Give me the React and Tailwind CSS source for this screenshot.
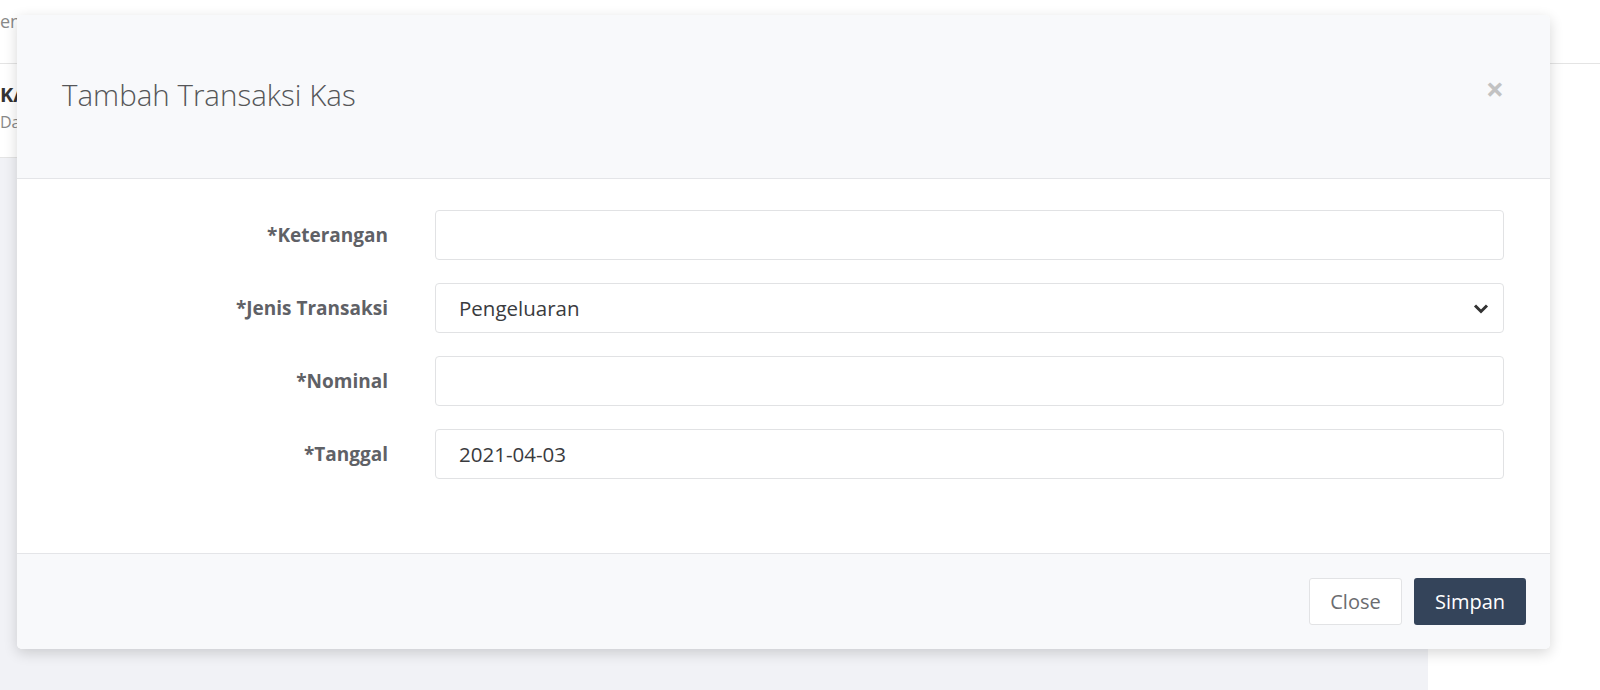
import React from 'react';

const fields = [
    { label: '*Keterangan', type: 'text', value: '' },
    { label: '*Jenis Transaksi', type: 'select', value: 'Pengeluaran' },
    { label: '*Nominal', type: 'text', value: '' },
    { label: '*Tanggal', type: 'text', value: '2021-04-03' },
];

const FormRow = ({ field }) => (
    <div className="flex items-center">
        <label className="w-[371px] shrink-0 text-right text-[19px] font-bold text-[#5f6166]">
            {field.label}
        </label>
        <div className="ml-[47px] flex-1 h-[50px] rounded-[4px] border border-[#e1e2e4] bg-white flex items-center px-[23px] text-[20.5px] text-[#3a3b3e]">
            <span className="flex-1">{field.value}</span>
            {field.type === 'select' && (
                <svg width="16" height="11" viewBox="0 0 16 11" className="-mr-[9px]">
                    <polyline points="2,2.5 8,8.5 14,2.5" fill="none" stroke="#333" strokeWidth="3" />
                </svg>
            )}
        </div>
    </div>
);

const App = () => {
    return (
        <div className="relative w-[1600px] h-[690px] overflow-hidden bg-white font-['Open_Sans',sans-serif]">
            {/* Page behind the modal */}
            <div className="h-[64px] border-b border-[#e4e4e4] flex items-start pt-[8px]">
                <span className="text-[18px] text-[#8a8a8a]">enu</span>
            </div>
            <div className="flex h-[626px]">
                <div className="w-[1428px] flex flex-col">
                    <div className="h-[94px] border-b border-[#e4e4e4] pt-[16px] pl-0">
                        <div className="text-[20px] font-bold text-[#333]">KAS</div>
                        <div className="text-[16px] text-[#888]">Data Kas</div>
                    </div>
                    <div className="flex-1 bg-[#f1f2f6]" />
                </div>
                <div className="flex-1 bg-white" />
            </div>

            {/* Modal */}
            <div className="absolute left-[17px] top-[15px] w-[1533px] rounded-[5px] bg-white shadow-[0_4px_14px_rgba(0,0,0,0.16)] overflow-hidden">
                <div className="h-[164px] bg-[#f8f9fb] border-b border-[#e4e5e8] flex items-center justify-between pl-[45px] pr-[46px]">
                    <h4 className="text-[29.5px] font-light text-[#555658] -mt-[2px]">Tambah Transaksi Kas</h4>
                    <span className="text-[32px] font-bold leading-none text-[#c2c2c2] -mt-[16px]">×</span>
                </div>
                <div className="pt-[31px] pb-[74px] pr-[46px] flex flex-col gap-[23px]">
                    {fields.map((f) => (
                        <FormRow key={f.label} field={f} />
                    ))}
                </div>
                <div className="h-[96px] bg-[#f8f9fb] border-t border-[#e4e5e8] flex items-center justify-end gap-[12px] pr-[24px]">
                    <button className="w-[93px] h-[47px] rounded-[3px] border border-[#e2e3e5] bg-white text-[20px] text-[#6b6c70]">
                        Close
                    </button>
                    <button className="w-[112px] h-[47px] rounded-[3px] bg-[#34445a] text-[20px] text-white">
                        Simpan
                    </button>
                </div>
            </div>
        </div>
    );
};

export default App;
